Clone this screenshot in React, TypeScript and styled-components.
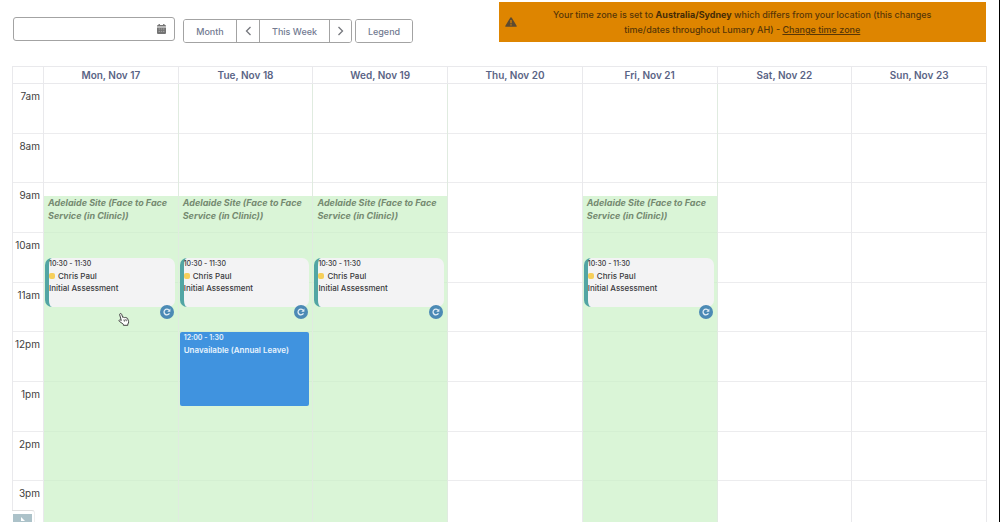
import React from "react";
import styled, { createGlobalStyle } from "styled-components";

const GlobalStyle = createGlobalStyle`
  * { box-sizing: border-box; }
  body { margin: 0; background: #fff; font-family: Inter, "Liberation Sans", sans-serif; color: #333; }
  button, input { font: inherit; }
`;

const Page = styled.div`
  position: relative;
  height: 100vh;
  overflow: hidden;
  padding: 2px 12px 0;
  border-right: 1px solid #000;
`;

const TopBar = styled.header`
  display: flex;
  justify-content: space-between;
  align-items: flex-start;
  height: 41px;
  margin-bottom: 23px;
`;

const Controls = styled.div`
  display: flex;
  align-items: flex-end;
  height: 41px;
  padding-left: 1px;
`;

const DateField = styled.label`
  display: flex;
  align-items: center;
  width: 162px;
  height: 24px;
  margin: 0 8px 2px 0;
  padding: 0 8px;
  border: 1px solid #a3a3a3;
  border-radius: 3px;
`;

const DateInput = styled.input`
  flex: 1;
  min-width: 0;
  border: 0;
  outline: 0;
  background: transparent;
  font-size: 9px;
`;

const ButtonGroup = styled.div`
  display: flex;
  height: 24px;
  margin-right: 3px;
  border: 1px solid #a3a3a3;
  border-radius: 3px;
  overflow: hidden;
`;

const ToolButton = styled.button<{ $width: number }>`
  display: flex;
  align-items: center;
  justify-content: center;
  width: ${(p) => p.$width}px;
  padding: 0;
  border: 0;
  background: #fff;
  color: #727a91;
  font-size: 9px;
  font-weight: 500;
  & + & { border-left: 1px solid #a3a3a3; }
`;

const Banner = styled.div`
  display: flex;
  align-items: center;
  width: 50%;
  height: 40px;
  margin-right: 1px;
  padding: 0 40px 0 6px;
  background: #de8500;
  color: #573607;
  font-size: 9px;
  font-weight: 500;
  line-height: 15px;
`;

const BannerText = styled.p`
  flex: 1;
  margin: 0 0 0 22px;
  text-align: center;
  b { color: #452b06; }
  a { color: inherit; }
`;

const Calendar = styled.main`
  display: grid;
  grid-template-columns: 31px repeat(7, 1fr);
  border-top: 1px solid #e9e9ec;
  border-left: 1px solid #e9e9ec;
`;

const DayHeading = styled.div`
  height: 17px;
  border-right: 1px solid #e9e9ec;
  border-bottom: 1px solid #e9e9ec;
  color: #5a6485;
  font-size: 10px;
  font-weight: 600;
  line-height: 16px;
  text-align: center;
`;

const Column = styled.div<{ $open?: boolean }>`
  display: grid;
  grid-template-rows: repeat(36, 1fr);
  grid-template-columns: 1fr;
  height: 447px;
  border-right: 1px solid ${(p) => (p.$open ? "#e0ebe0" : "#e9e9ec")};
`;

const Slot = styled.div<{ $hour: number }>`
  grid-column: 1;
  grid-row: ${(p) => p.$hour * 4 + 1} / span 4;
  min-height: 0;
  border-bottom: 1px solid #ececee;
`;

const HourLabel = styled(Slot)`
  padding: 4px 3px 0 0;
  color: #3e3e40;
  font-size: 10px;
  line-height: 16px;
  text-align: right;
`;

const Availability = styled.div`
  grid-column: 1;
  grid-row: 10 / -1;
  min-height: 0;
  padding: 0 4px;
  background: rgba(202, 241, 198, 0.7);
  color: #758a71;
  font-size: 9px;
  font-style: italic;
  font-weight: 700;
  line-height: 13px;
`;

const Appointment = styled.article`
  position: relative;
  grid-column: 1;
  grid-row: 15 / span 4;
  min-height: 0;
  margin: 0 3px 1px 1px;
  border-left: 4px solid #52a5a4;
  border-radius: 7px;
  background: #f3f3f4;
  color: #39393c;
  font-size: 8px;
  font-weight: 500;
  line-height: 12px;
`;

const Time = styled.time`
  display: block;
  font-size: 7px;
  line-height: 12px;
`;

const Client = styled.div`
  display: flex;
  align-items: center;
  gap: 3px;
  height: 12px;
`;

const Status = styled.span`
  width: 6px;
  height: 6px;
  border-radius: 2px;
  background: #f6cf5b;
`;

const Repeat = styled.span`
  position: absolute;
  right: 1px;
  bottom: -12px;
  display: flex;
  width: 14px;
  height: 14px;
  align-items: center;
  justify-content: center;
  border-radius: 50%;
  background: #4c8ab5;
`;

const Leave = styled.article`
  grid-column: 1;
  grid-row: 21 / span 6;
  min-height: 0;
  margin: 0 3px 1px 1px;
  padding: 0 4px;
  border-radius: 2px;
  background: #4093df;
  color: #e8f3fd;
  font-size: 8px;
  font-weight: 600;
  line-height: 12px;
`;

const Pointer = styled.svg`
  position: absolute;
  left: 118px;
  top: 312px;
`;

const CornerPanel = styled.div`
  position: absolute;
  left: 12px;
  bottom: 0;
  height: 12px;
  padding: 3px 2px 0 1px;
  border-top: 1px solid #dedede;
  border-right: 1px solid #eee;
  border-top-right-radius: 3px;
  background: #fff;
`;

const CornerButton = styled.button`
  display: flex;
  justify-content: center;
  width: 19px;
  height: 8px;
  padding: 3px 0 0;
  border: 0;
  background: #acc2c9;
`;

const days = [
  { name: "Mon, Nov 17", open: true },
  { name: "Tue, Nov 18", open: true, leave: true },
  { name: "Wed, Nov 19", open: true },
  { name: "Thu, Nov 20" },
  { name: "Fri, Nov 21", open: true },
  { name: "Sat, Nov 22" },
  { name: "Sun, Nov 23" },
];
const hours = ["7am", "8am", "9am", "10am", "11am", "12pm", "1pm", "2pm", "3pm"];

const Chevron = ({ d }: { d: string }) => (
  <svg width="7" height="10" viewBox="0 0 7 10" fill="none" stroke="#75777d" strokeWidth="1.3">
    <path d={d} />
  </svg>
);

const Session = () => (
  <Appointment>
    <Time>10:30 - 11:30</Time>
    <Client><Status />Chris Paul</Client>
    <div>Initial Assessment</div>
    <Repeat>
      <svg width="8" height="8" viewBox="0 0 8 8" fill="none" stroke="#e3eef6" strokeWidth="1.3">
        <path d="M6.4 5.2A2.8 2.8 0 1 1 6 2.2" />
        <path d="M7.4.6V3.7H4.3Z" fill="#e3eef6" stroke="none" />
      </svg>
    </Repeat>
  </Appointment>
);

export default function App() {
  return (
    <Page>
      <GlobalStyle />
      <TopBar>
        <Controls>
          <DateField>
            <DateInput type="text" aria-label="Date" />
            <svg width="9" height="10" viewBox="0 0 9 10" fill="#747474">
              <path d="M1.5 0h1.4v1h3.2V0h1.4v1H8q1 0 1 1v.6H0V2q0-1 1-1h.5ZM0 3.4h9V9q0 1-1 1H1Q0 10 0 9Z" />
              <path d="M1.6 5h5.8M1.6 7.4h5.8" stroke="#b5b5b5" strokeWidth=".8" strokeDasharray="1.4 .8" />
            </svg>
          </DateField>
          <ButtonGroup>
            <ToolButton $width={52}>Month</ToolButton>
            <ToolButton $width={23} aria-label="Previous week"><Chevron d="M5.5 1 1.5 5l4 4" /></ToolButton>
            <ToolButton $width={70}>This Week</ToolButton>
            <ToolButton $width={22} aria-label="Next week"><Chevron d="m1.5 1 4 4-4 4" /></ToolButton>
          </ButtonGroup>
          <ButtonGroup>
            <ToolButton $width={56}>Legend</ToolButton>
          </ButtonGroup>
        </Controls>
        <Banner role="alert">
          <svg width="12" height="10" viewBox="0 0 12 10">
            <path d="M6 .2q.5 0 .8.5l4.8 8q.5 1.1-.7 1.1H1.1Q-.1 9.800.4 8.700L5.200.7Q5.500.2 6 .2Z" fill="#5c4a30" />
            <path d="M6 3v3.300M6 7.300v1.200" stroke="#de8500" strokeWidth="1.200" />
          </svg>
          <BannerText>
            Your time zone is set to <b>Australia/Sydney</b> which differs from your location (this changes
            time/dates throughout Lumary AH) - <a href="#timezone">Change time zone</a>
          </BannerText>
        </Banner>
      </TopBar>
      <Calendar>
        <DayHeading />
        {days.map((day) => <DayHeading key={day.name}>{day.name}</DayHeading>)}
        <Column>
          {hours.map((hour, i) => <HourLabel key={hour} $hour={i}>{hour}</HourLabel>)}
        </Column>
        {days.map((day) => (
          <Column key={day.name} $open={day.open}>
            {hours.map((hour, i) => <Slot key={hour} $hour={i} />)}
            {day.open && <Availability>Adelaide Site (Face to Face Service (in Clinic))</Availability>}
            {day.open && <Session />}
            {day.leave && (
              <Leave>
                <Time>12:00 - 1:30</Time>
                Unavailable (Annual Leave)
              </Leave>
            )}
          </Column>
        ))}
      </Calendar>
      <Pointer width="12" height="15" viewBox="0 0 12 15" fill="#fff" stroke="#444" strokeWidth="1" strokeLinejoin="round">
        <path d="M3.300 8.500 1.700 2.800q-.2-1.100.7-1.300.8-.2 1.200.7l1.200 3.300q1-.7 1.600.1 1-.6 1.600.3 1.300-.5 1.700.8l.9 3q.2 1.400-.8 2.300v1.300H5.400v-1L1.300 9.300Q.6 8.300 1.500 7.900q.8-.2 1.800.6Z" />
        <path d="m6 7.500.4 2M7.800 7.200l.5 2" fill="none" />
      </Pointer>
      <CornerPanel>
        <CornerButton aria-label="Expand panel">
          <svg width="6" height="5" viewBox="0 0 6 5" fill="#fff"><path d="m1 0 4 4H1Z" /></svg>
        </CornerButton>
      </CornerPanel>
    </Page>
  );
}
